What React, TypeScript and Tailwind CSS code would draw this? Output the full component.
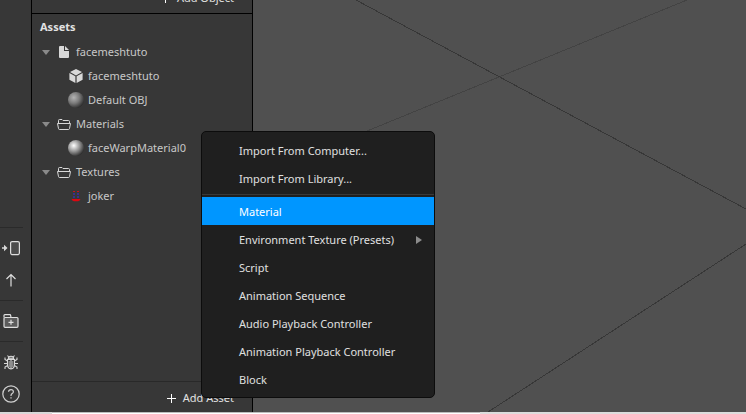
import type { ReactNode } from "react";

type Asset = { label: string; icon: ReactNode; depth: 0 | 1 };

function FileIcon() {
  return (
    <svg width="10" height="12" viewBox="0 0 10 12" aria-hidden="true">
      <path d="M0 1a1 1 0 0 1 1-1h4v5h5v6a1 1 0 0 1-1 1H1a1 1 0 0 1-1-1z" fill="#d8d8d8" />
      <path d="M6 0l4 4H6z" fill="#d8d8d8" />
    </svg>
  );
}

function CubeIcon() {
  return (
    <svg width="14" height="14" viewBox="0 0 14 14" aria-hidden="true">
      <path d="M7 0l6 3.1L7 6.4 1 3.1z" fill="#d8d8d8" />
      <path d="M.4 4l6 3.3V14l-6-3.2z" fill="#d8d8d8" />
      <path d="M13.600 4l-6 3.300V14l6-3.200z" fill="#d8d8d8" />
    </svg>
  );
}

function SphereIcon({ id, light, mid }: { id: string; light: string; mid: string }) {
  return (
    <svg width="16" height="16" viewBox="0 0 16 16" aria-hidden="true">
      <defs>
        <radialGradient id={id} cx="0.36" cy="0.35" r="0.7">
          <stop offset="0" stopColor={light} />
          <stop offset="0.5" stopColor={mid} />
          <stop offset="1" stopColor="#2c2c2c" />
        </radialGradient>
      </defs>
      <circle cx="8" cy="8" r="8" fill={`url(#${id})`} />
    </svg>
  );
}

function FolderIcon() {
  return (
    <svg width="14" height="11" viewBox="0 0 14 11" fill="none" stroke="#d8d8d8" aria-hidden="true">
      <path d="M1.500 4V1.500q0-1 1-1h2.500l1 1h5.500q1 0 1 1V4" />
      <path d="M.5 4.500h13l-1 5q-.2 1-1 1h-9q-.8 0-1-1z" />
    </svg>
  );
}

function JokerIcon() {
  return (
    <svg width="10" height="11" viewBox="0 0 10 11" fill="none" aria-hidden="true">
      <path d="M2 .5h2M6 .5h2" stroke="#c8101c" />
      <path d="M3 2v5M7 2v5" stroke="#3a2f8c" strokeWidth="2" strokeDasharray="2 1" />
      <path d="M.5 8h9q-.5 2-2.500 2.300h-4Q1 10 .5 8z" fill="#dd0710" />
    </svg>
  );
}

const assets: Asset[] = [
  { label: "facemeshtuto", icon: <FileIcon />, depth: 0 },
  { label: "facemeshtuto", icon: <CubeIcon />, depth: 1 },
  { label: "Default OBJ", icon: <SphereIcon id="sphere-obj" light="#b4b4b4" mid="#7c7c7c" />, depth: 1 },
  { label: "Materials", icon: <FolderIcon />, depth: 0 },
  { label: "faceWarpMaterial0", icon: <SphereIcon id="sphere-warp" light="#ffffff" mid="#9a9a9a" />, depth: 1 },
  { label: "Textures", icon: <FolderIcon />, depth: 0 },
  { label: "joker", icon: <JokerIcon />, depth: 1 },
];

const createItems = [
  "Material",
  "Environment Texture (Presets)",
  "Script",
  "Animation Sequence",
  "Audio Playback Controller",
  "Animation Playback Controller",
  "Block",
];

function RailButton({ label, children }: { label: string; children: ReactNode }) {
  return (
    <button type="button" aria-label={label} className="flex h-8 w-full items-center justify-center pr-px">
      {children}
    </button>
  );
}

function Rail() {
  return (
    <nav
      aria-label="Tools"
      className="flex w-8 shrink-0 flex-col justify-end border-r border-black bg-[#373737] pb-0.5"
    >
      <div className="w-[23px] border-t border-[#2a2a2a] py-1">
        <RailButton label="Send to device">
          <svg width="20" height="16" viewBox="0 0 20 16" fill="none" aria-hidden="true">
            <path d="M1 8h3" stroke="#d8d8d8" strokeWidth="1.500" />
            <path d="M3 4.800L6.500 8 3 11.200z" fill="#d8d8d8" />
            <rect x="9.600" y="1.600" width="8.800" height="13" rx="1.500" fill="#4c4c4c" stroke="#dedede" strokeWidth="1.200" />
          </svg>
        </RailButton>
        <RailButton label="Upload">
          <svg width="12" height="14" viewBox="0 0 12 14" fill="none" stroke="#dedede" strokeWidth="1.200" aria-hidden="true">
            <path d="M6 13.500V1.500M1.500 6L6 1.500 10.500 6" />
          </svg>
        </RailButton>
      </div>
      <div className="w-[23px] border-y border-[#2a2a2a] py-1">
        <RailButton label="Add from library">
          <svg width="16" height="14" viewBox="0 0 16 14" fill="none" stroke="#dedede" strokeWidth="1.200" aria-hidden="true">
            <path d="M1 3.500V1.500q0-.8.8-.8h5q.8 0 .8.8l.4 1.800" />
            <rect x="1" y="3.500" width="14" height="9.800" rx="1" fill="#5c5c5c" />
            <path d="M8 5.800v5M5.500 8.300h5" />
          </svg>
        </RailButton>
      </div>
      <div className="w-[23px] pt-1">
        <RailButton label="Report a bug">
          <svg width="14" height="15" viewBox="0 0 14 15" fill="none" stroke="#d8d8d8" strokeWidth="1.100" aria-hidden="true">
            <path d="M4.300 3.800a2.700 2.500 0 0 1 5.400 0z" fill="#777" />
            <path d="M3.500 4.500h7v5q0 4-3.500 4.500Q3.500 13.500 3.500 9.500z" />
            <path d="M7 5v9M4.700 2L3.500.5M9.300 2L10.500.5M3.500 6L1 4.500V2.500M10.500 6L13 4.500V2.500M0 8.500h3.500M10.500 8.500H14M3.600 10.500L1 12v2M10.400 10.500L13 12v2" />
            <path d="M5.200 6v6M8.800 6v6" strokeWidth="0.700" />
          </svg>
        </RailButton>
        <RailButton label="Help">
          <svg width="18" height="18" viewBox="0 0 18 18" fill="none" stroke="#d0d0d0" strokeWidth="1.200" aria-hidden="true">
            <circle cx="9" cy="9" r="8.200" />
            <path d="M6.500 6.800Q6.700 4.700 9 4.700t2.400 2q0 1.100-1.200 1.900T9 10.500v.5" />
            <path d="M9 12.300v1.300" />
          </svg>
        </RailButton>
      </div>
    </nav>
  );
}

function AddButton({ label }: { label: string }) {
  return (
    <button type="button" className="flex h-[30px] shrink-0 items-center gap-[7px] pr-[18px]">
      <svg width="9" height="9" viewBox="0 0 9 9" stroke="#ffffff" aria-hidden="true">
        <path d="M4.500 0v9M0 4.500h9" />
      </svg>
      {label}
    </button>
  );
}

function AssetsPanel() {
  return (
    <aside className="flex w-[221px] shrink-0 flex-col border-r border-black bg-[#373737] text-[#e2e2e2]">
      <div className="flex h-3.5 items-end justify-end overflow-hidden border-b border-black">
        <AddButton label="Add Object" />
      </div>
      <h2 className="px-2 py-[3px] text-[11px] leading-5 font-bold">Assets</h2>
      <ul className="grow text-[#c8c8c8]">
        {assets.map((asset, i) => (
          <li key={i} className="flex h-6 items-center pl-2.5">
            {asset.depth === 0 ? (
              <button type="button" aria-label={`Collapse ${asset.label}`} className="w-3.5">
                <svg width="8" height="5" viewBox="0 0 8 5" aria-hidden="true">
                  <path d="M0 0h8L4 5z" fill="#8a8a8a" />
                </svg>
              </button>
            ) : (
              <span className="w-[26px]" />
            )}
            <span className="flex w-4 justify-center">{asset.icon}</span>
            <span className="pl-1">{asset.label}</span>
          </li>
        ))}
      </ul>
      <div className="flex h-[31px] items-center justify-end border-t border-[#292929] pt-0.5">
        <AddButton label="Add Asset" />
      </div>
    </aside>
  );
}

function Viewport() {
  return (
    <main className="min-w-0 grow overflow-hidden bg-[#505050]">
      <svg width="493" height="412" viewBox="0 0 493 412" fill="none" shapeRendering="crispEdges" aria-hidden="true">
        <path d="M434 0L114 131" stroke="#434343" />
        <path d="M103 0L493 209" stroke="#373737" />
        <path d="M493 244L235 412" stroke="#373737" />
      </svg>
    </main>
  );
}

function MenuItem({ label, active, submenu }: { label: string; active?: boolean; submenu?: boolean }) {
  return (
    <button
      type="button"
      role="menuitem"
      className={
        active
          ? "flex h-7 w-full items-center justify-between bg-[#0096ff] pt-0.5 pr-3 pl-[37px] text-white"
          : "flex h-7 w-full items-center justify-between pt-0.5 pr-3 pl-[37px]"
      }
    >
      {label}
      {submenu && (
        <svg width="6" height="8" viewBox="0 0 6 8" aria-hidden="true">
          <path d="M0 0l6 4-6 4z" fill="#8c8c8c" />
        </svg>
      )}
    </button>
  );
}

function ContextMenu() {
  return (
    <div
      role="menu"
      className="absolute top-[131px] left-[201px] w-[234px] rounded-[5px] border border-[#0c0c0c] bg-[#1f1f1f] py-1 text-[#e0e0e0]"
    >
      <MenuItem label="Import From Computer..." />
      <MenuItem label="Import From Library..." />
      <div role="separator" className="my-0.5 h-px bg-[#393939]" />
      {createItems.map((label, i) => (
        <MenuItem key={label} label={label} active={i === 0} submenu={i === 1} />
      ))}
    </div>
  );
}

export default function App() {
  return (
    <div className="relative flex min-h-screen flex-col bg-[#505050] font-['Noto_Sans','Open_Sans',sans-serif] text-[11px] leading-4">
      <div className="flex grow">
        <Rail />
        <AssetsPanel />
        <Viewport />
      </div>
      <footer className="flex h-0.5">
        <div className="w-[52px] bg-[#d8d8d8]" />
        <div className="w-[428px] border-t border-[#bdbdbd] bg-white" />
        <div className="grow bg-[#dddddd]" />
      </footer>
      <ContextMenu />
    </div>
  );
}
